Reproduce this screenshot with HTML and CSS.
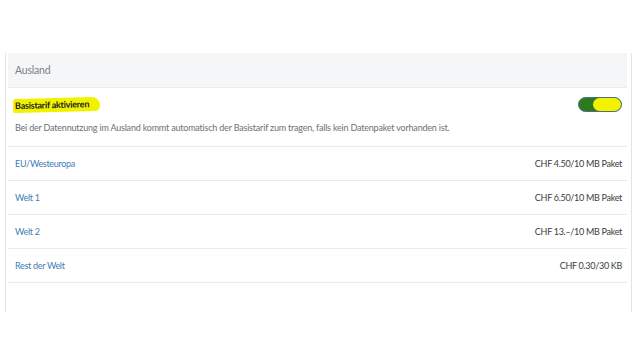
FILE: index.html
```html
<!DOCTYPE html>
<html lang="de">
<head>
    <meta charset="UTF-8">
    <meta name="viewport" content="width=device-width, initial-scale=1.0">
    <title>Ausland</title>
    <link rel="stylesheet" href="styles.css">
</head>
<body>
    <div class="wrap">
        <div class="panel">
            <div class="head">Ausland</div>
            <div class="basis">
                <div class="basis_top">
                    <span class="mark">Basistarif aktivieren</span>
                    <span class="toggle"><span class="knob"></span></span>
                </div>
                <p class="desc">Bei der Datennutzung im Ausland kommt automatisch der Basistarif zum tragen, falls kein Datenpaket vorhanden ist.</p>
            </div>
            <ul class="zones">
                <li><a href="#">EU/Westeuropa</a><span class="price">CHF 4.50/10 MB Paket</span></li>
                <li><a href="#">Welt 1</a><span class="price">CHF 6.50/10 MB Paket</span></li>
                <li><a href="#">Welt 2</a><span class="price">CHF 13.–/10 MB Paket</span></li>
                <li><a href="#">Rest der Welt</a><span class="price">CHF 0.30/30 KB</span></li>
            </ul>
        </div>
    </div>
</body>
</html>
```
FILE: styles.css
```css
* {margin: 0; padding: 0; box-sizing: border-box;}
ul,li {list-style: none;}
a {text-decoration: none;}

body {background-color: #fff; font-family: Lato, "Noto Sans", sans-serif; color: #333;}

.wrap {margin: 53px 0 0 5px; width: 627px; height: 259px;
       border-left: 1px solid #e2e4e8; border-right: 1px solid #e2e4e8;}
.panel {padding: 0 4px 0 2px;}

.head {height: 35px; line-height: 34px; padding-left: 7px; background-color: #f5f6f8;
       border-bottom: 1px solid #e9ebee; color: #7b8086; font-size: 10.5px; letter-spacing: -0.2px;}

.basis {height: 59px; padding: 9px 5px 0 7px; border-bottom: 1px solid #e9ebee;}
.basis_top {display: flex; justify-content: space-between; align-items: center; height: 15px;}
.mark {display: inline-block; margin-left: -2px; padding: 1px 11px 1px 2px; line-height: 12px;
       background-color: #f2f200; border-radius: 3px 8px 5px 2px; transform: rotate(-1.5deg);
       color: #222; font-size: 9px; font-weight: bold; letter-spacing: -0.25px;}
.toggle {display: flex; justify-content: flex-end; width: 44px; height: 15px; border-radius: 8px;
         background-color: #2c7a1c; border: 1.5px solid #4f6f7c;}
.knob {width: 28px; height: 100%; border-radius: 7px; background-color: #f4f200;}
.desc {margin-top: 10px; color: #6c7177; font-size: 9px; letter-spacing: -0.2px;}

.zones li {display: flex; justify-content: space-between; align-items: center; height: 34px;
           padding: 0 5px 0 7px; border-bottom: 1px solid #e9ebee; font-size: 9px; letter-spacing: -0.3px;}
.zones li a {color: #3f7bb6;}
.zones .price {color: #3a3d42;}
```
